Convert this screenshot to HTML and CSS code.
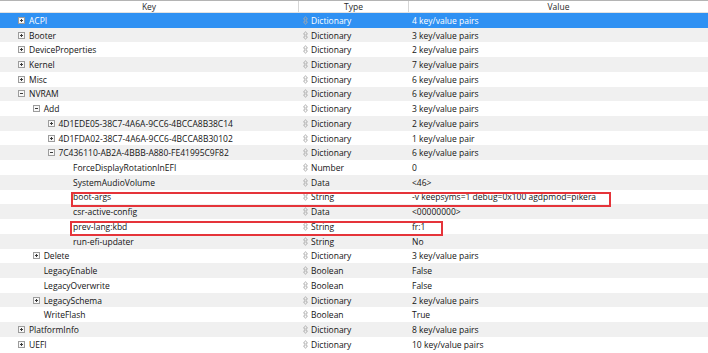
FILE: index.html
```html
<!DOCTYPE html>
<html>
<head>
<meta charset="utf-8">
<link rel="stylesheet" href="styles.css">
</head>
<body>
<svg class="defs" width="0" height="0">
  <defs>
    <symbol id="ud" viewBox="0 0 5 9">
      <path d="M2.5 0.6 L4.5 3.1 H3.2 V5.9 H4.5 L2.5 8.4 L0.5 5.9 H1.8 V3.1 H0.5 Z" fill="none" stroke="#a9a9a9" stroke-width="0.8" stroke-linejoin="round"/>
    </symbol>
    <symbol id="plus" viewBox="0 0 7 7">
      <rect x="0.5" y="0.5" width="6" height="6" fill="#f7f7f7" stroke="#9c9c9c" stroke-width="1"/>
      <path d="M2 3.5 H5 M3.5 2 V5" stroke="#3a3a3a" stroke-width="1"/>
    </symbol>
    <symbol id="minus" viewBox="0 0 7 7">
      <rect x="0.5" y="0.5" width="6" height="6" fill="#f7f7f7" stroke="#9c9c9c" stroke-width="1"/>
      <path d="M2 3.5 H5" stroke="#3a3a3a" stroke-width="1"/>
    </symbol>
  </defs>
</svg>
<div class="table">
  <div class="head">
    <div class="hcell">Key</div>
    <div class="hcell">Type</div>
    <div class="hcell last">Value</div>
  </div>
  <div class="body">
    <div class="row sel"><div class="key l0"><svg class="exp"><use href="#plus"/></svg>ACPI</div><div class="type"><svg class="ud"><use href="#ud"/></svg>Dictionary</div><div class="val">4 key/value pairs</div></div>
    <div class="row alt"><div class="key l0"><svg class="exp"><use href="#plus"/></svg>Booter</div><div class="type"><svg class="ud"><use href="#ud"/></svg>Dictionary</div><div class="val">3 key/value pairs</div></div>
    <div class="row"><div class="key l0"><svg class="exp"><use href="#plus"/></svg>DeviceProperties</div><div class="type"><svg class="ud"><use href="#ud"/></svg>Dictionary</div><div class="val">2 key/value pairs</div></div>
    <div class="row alt"><div class="key l0"><svg class="exp"><use href="#plus"/></svg>Kernel</div><div class="type"><svg class="ud"><use href="#ud"/></svg>Dictionary</div><div class="val">7 key/value pairs</div></div>
    <div class="row"><div class="key l0"><svg class="exp"><use href="#plus"/></svg>Misc</div><div class="type"><svg class="ud"><use href="#ud"/></svg>Dictionary</div><div class="val">6 key/value pairs</div></div>
    <div class="row alt"><div class="key l0"><svg class="exp"><use href="#minus"/></svg>NVRAM</div><div class="type"><svg class="ud"><use href="#ud"/></svg>Dictionary</div><div class="val">6 key/value pairs</div></div>
    <div class="row"><div class="key l1"><svg class="exp"><use href="#minus"/></svg>Add</div><div class="type"><svg class="ud"><use href="#ud"/></svg>Dictionary</div><div class="val">3 key/value pairs</div></div>
    <div class="row alt"><div class="key l2"><svg class="exp"><use href="#plus"/></svg>4D1EDE05-38C7-4A6A-9CC6-4BCCA8B38C14</div><div class="type"><svg class="ud"><use href="#ud"/></svg>Dictionary</div><div class="val">2 key/value pairs</div></div>
    <div class="row"><div class="key l2"><svg class="exp"><use href="#plus"/></svg>4D1FDA02-38C7-4A6A-9CC6-4BCCA8B30102</div><div class="type"><svg class="ud"><use href="#ud"/></svg>Dictionary</div><div class="val">1 key/value pair</div></div>
    <div class="row alt"><div class="key l2"><svg class="exp"><use href="#minus"/></svg>7C436110-AB2A-4BBB-A880-FE41995C9F82</div><div class="type"><svg class="ud"><use href="#ud"/></svg>Dictionary</div><div class="val">6 key/value pairs</div></div>
    <div class="row"><div class="key l3"><span class="sp"></span>ForceDisplayRotationInEFI</div><div class="type"><svg class="ud"><use href="#ud"/></svg>Number</div><div class="val">0</div></div>
    <div class="row alt"><div class="key l3"><span class="sp"></span>SystemAudioVolume</div><div class="type"><svg class="ud"><use href="#ud"/></svg>Data</div><div class="val">&lt;46&gt;</div></div>
    <div class="row"><div class="key l3"><span class="sp"></span>boot-args</div><div class="type"><svg class="ud"><use href="#ud"/></svg>String</div><div class="val">-v keepsyms=1 debug=0x100 agdpmod=pikera</div><div class="mark mark-boot"></div></div>
    <div class="row alt"><div class="key l3"><span class="sp"></span>csr-active-config</div><div class="type"><svg class="ud"><use href="#ud"/></svg>Data</div><div class="val">&lt;00000000&gt;</div></div>
    <div class="row"><div class="key l3"><span class="sp"></span>prev-lang:kbd</div><div class="type"><svg class="ud"><use href="#ud"/></svg>String</div><div class="val">fr:1</div><div class="mark mark-lang"></div></div>
    <div class="row alt"><div class="key l3"><span class="sp"></span>run-efi-updater</div><div class="type"><svg class="ud"><use href="#ud"/></svg>String</div><div class="val">No</div></div>
    <div class="row"><div class="key l1"><svg class="exp"><use href="#plus"/></svg>Delete</div><div class="type"><svg class="ud"><use href="#ud"/></svg>Dictionary</div><div class="val">3 key/value pairs</div></div>
    <div class="row alt"><div class="key l1"><span class="sp"></span>LegacyEnable</div><div class="type"><svg class="ud"><use href="#ud"/></svg>Boolean</div><div class="val">False</div></div>
    <div class="row"><div class="key l1"><span class="sp"></span>LegacyOverwrite</div><div class="type"><svg class="ud"><use href="#ud"/></svg>Boolean</div><div class="val">False</div></div>
    <div class="row alt"><div class="key l1"><svg class="exp"><use href="#plus"/></svg>LegacySchema</div><div class="type"><svg class="ud"><use href="#ud"/></svg>Dictionary</div><div class="val">2 key/value pairs</div></div>
    <div class="row"><div class="key l1"><span class="sp"></span>WriteFlash</div><div class="type"><svg class="ud"><use href="#ud"/></svg>Boolean</div><div class="val">True</div></div>
    <div class="row alt"><div class="key l0"><svg class="exp"><use href="#plus"/></svg>PlatformInfo</div><div class="type"><svg class="ud"><use href="#ud"/></svg>Dictionary</div><div class="val">8 key/value pairs</div></div>
    <div class="row"><div class="key l0"><svg class="exp"><use href="#plus"/></svg>UEFI</div><div class="type"><svg class="ud"><use href="#ud"/></svg>Dictionary</div><div class="val">10 key/value pairs</div></div>
  </div>
</div>
</body>
</html>
```

FILE: styles.css
```css
html, body {
  margin: 0;
  padding: 0;
  background: #ffffff;
}
body {
  font-family: "Open Sans", "Noto Sans", sans-serif;
  font-size: 8.5px;
  color: #141414;
  width: 708px;
  height: 353px;
  overflow: hidden;
}
.defs {
  position: absolute;
  width: 0;
  height: 0;
}
.table {
  display: flex;
  flex-direction: column;
}
.head {
  display: grid;
  grid-template-columns: 299px 110px 1fr;
  height: 11px;
  border-top: 1px solid #b4b4b4;
  border-bottom: 1px solid #e2e2e2;
  background: #ffffff;
}
.hcell {
  display: flex;
  align-items: center;
  justify-content: center;
  border-right: 1px solid #d6d6d6;
  color: #2a2a2a;
  line-height: 11px;
}
.hcell.last {
  border-right: none;
}
.row {
  position: relative;
  display: grid;
  grid-template-columns: 299px 110px 1fr;
  height: 14.72px;
  align-items: center;
  white-space: nowrap;
}
.row.alt {
  background: #f0f0f0;
}
.row.sel {
  background: #2f91f3;
  color: #ffffff;
}
.key, .type, .val {
  display: flex;
  align-items: center;
  height: 100%;
}
.key.l0 { padding-left: 18.3px; }
.key.l1 { padding-left: 33px; }
.key.l2 { padding-left: 47.7px; }
.key.l3 { padding-left: 62.4px; }
.exp, .sp {
  width: 7px;
  height: 7px;
  margin-right: 3.7px;
  flex: none;
}
.type {
  padding-left: 4px;
}
.ud {
  width: 5px;
  height: 9px;
  margin-right: 3px;
  flex: none;
}
.val {
  padding-left: 3px;
}
.mark {
  position: absolute;
  z-index: 5;
  border: 2px solid #e5343a;
  box-sizing: border-box;
  top: 2.4px;
  height: 14.6px;
  pointer-events: none;
}
.mark-boot {
  left: 71px;
  width: 540px;
}
.mark-lang {
  left: 70px;
  width: 373px;
}
```
